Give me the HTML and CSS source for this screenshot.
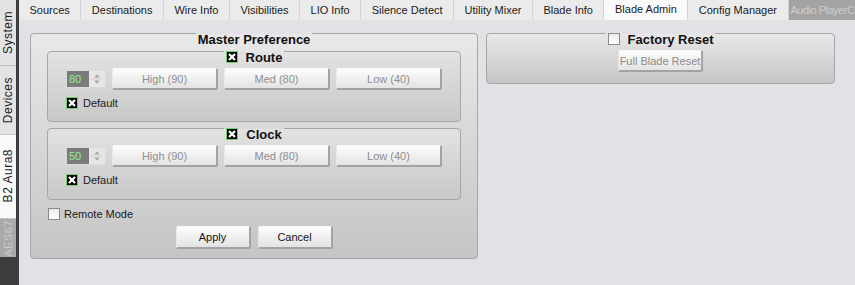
FILE: index.html
```html
<html>
  <head>
    <link rel="stylesheet" href="styles.css">
  </head>
  <body>
    <div class="app">
      <nav class="side">
        <div class="vtab"><span>System</span></div>
        <div class="vtab"><span>Devices</span></div>
        <div class="vtab vtab-active"><span>B2 Aura8</span></div>
        <div class="vtab vtab-off"><span>AES67</span></div>
      </nav>
      <div class="main">
        <div class="tabbar">
          <div class="tab">Sources</div>
          <div class="tab">Destinations</div>
          <div class="tab">Wire Info</div>
          <div class="tab">Visibilities</div>
          <div class="tab">LIO Info</div>
          <div class="tab">Silence Detect</div>
          <div class="tab">Utility Mixer</div>
          <div class="tab">Blade Info</div>
          <div class="tab tab-active">Blade Admin</div>
          <div class="tab">Config Manager</div>
          <div class="tab tab-off">Audio PlayerC</div>
        </div>
        <div class="content">
          <fieldset class="group master">
            <legend>Master Preference</legend>

            <fieldset class="group sub sub-first">
              <legend><svg class="chk" viewBox="0 0 12 12"><rect x="0.5" y="0.5" width="11" height="11" fill="#000" stroke="#6fd46f"/><path d="M3 3l6 6M9 3l-6 6" stroke="#fff" stroke-width="2.3"/></svg>Route</legend>
              <div class="pref-row">
                <div class="spin">
                  <span class="spin-val">80</span>
                  <span class="spin-btns"><svg viewBox="0 0 15 14"><path d="M5 5.5l2.5-3 2.5 3z" fill="#a8a8a8"/><path d="M2 7h11" stroke="#d4d4d4"/><path d="M5 8.5l2.5 3 2.5-3z" fill="#a8a8a8"/></svg></span>
                </div>
                <button class="btn" disabled>High (90)</button>
                <button class="btn" disabled>Med (80)</button>
                <button class="btn" disabled>Low (40)</button>
              </div>
              <div class="check-row"><svg class="chk" viewBox="0 0 12 12"><rect x="0.5" y="0.5" width="11" height="11" fill="#000" stroke="#6fd46f"/><path d="M3 3l6 6M9 3l-6 6" stroke="#fff" stroke-width="2.3"/></svg>Default</div>
            </fieldset>

            <fieldset class="group sub sub-next">
              <legend><svg class="chk" viewBox="0 0 12 12"><rect x="0.5" y="0.5" width="11" height="11" fill="#000" stroke="#6fd46f"/><path d="M3 3l6 6M9 3l-6 6" stroke="#fff" stroke-width="2.3"/></svg>Clock</legend>
              <div class="pref-row">
                <div class="spin">
                  <span class="spin-val">50</span>
                  <span class="spin-btns"><svg viewBox="0 0 15 14"><path d="M5 5.5l2.5-3 2.5 3z" fill="#a8a8a8"/><path d="M2 7h11" stroke="#d4d4d4"/><path d="M5 8.5l2.5 3 2.5-3z" fill="#a8a8a8"/></svg></span>
                </div>
                <button class="btn" disabled>High (90)</button>
                <button class="btn" disabled>Med (80)</button>
                <button class="btn" disabled>Low (40)</button>
              </div>
              <div class="check-row"><svg class="chk" viewBox="0 0 12 12"><rect x="0.5" y="0.5" width="11" height="11" fill="#000" stroke="#6fd46f"/><path d="M3 3l6 6M9 3l-6 6" stroke="#fff" stroke-width="2.3"/></svg>Default</div>
            </fieldset>

            <div class="check-row remote"><span class="box"></span>Remote Mode</div>
            <div class="actions">
              <button class="btn btn-on">Apply</button>
              <button class="btn btn-on">Cancel</button>
            </div>
          </fieldset>

          <fieldset class="group factory">
            <legend><span class="box"></span>Factory Reset</legend>
            <button class="btn btn-small" disabled>Full Blade Reset</button>
          </fieldset>
        </div>
      </div>
    </div>
  </body>
</html>
```

FILE: styles.css
```css
body {
    margin: 0;
    font-family: "Liberation Sans", Arial, sans-serif;
    font-size: 11px;
    color: #1a1a1a;
    background: #e2e2e6;
}
.app {
    display: flex;
    height: 285px;
    overflow: hidden;
}
.side {
    width: 19px;
    flex: none;
    background: #3d3d3d;
    display: flex;
    flex-direction: column;
}
.vtab {
    width: 16px;
    padding: 11px 0;
    background: #e3e3e3;
    border-bottom: 1px solid #c4c4c4;
    display: flex;
    justify-content: center;
    align-items: center;
}
.vtab span {
    writing-mode: vertical-rl;
    transform: rotate(180deg);
    font-size: 12px;
    letter-spacing: 0.5px;
    line-height: 16px;
    color: #1c1c1c;
}
.vtab-active {
    background: #fafafa;
    padding: 14px 0 15px;
}
.vtab-off {
    background: #a9a9a9;
    border-bottom: none;
    padding: 1px 0;
}
.vtab-off span {
    color: #cacaca;
    font-size: 11px;
}
.main {
    flex: 1;
    min-width: 0;
    display: flex;
    flex-direction: column;
}
.tabbar {
    height: 20px;
    display: flex;
    overflow: hidden;
    background: #3d3d3d;
}
.tab {
    flex: none;
    height: 20px;
    box-sizing: border-box;
    padding: 1px 10.5px 0;
    line-height: 19px;
    white-space: nowrap;
    background: #ebebeb;
    border-right: 1px solid #d2d2d2;
}
.tab-active {
    background: #f9f9f9;
    padding-top: 0;
}
.tab-off {
    background: #a3a3a3;
    color: #cdcdcd;
    padding: 1px 0 0 2px;
    border-right: none;
    letter-spacing: -0.5px;
    flex: 1;
}
.content {
    flex: 1;
    display: flex;
    align-items: flex-start;
    gap: 8px;
    padding: 0 20px 0 11px;
    background: #e2e2e6;
}
.group {
    box-sizing: border-box;
    margin: 0;
    min-inline-size: 0;
    border: 1px solid #a6a6a6;
    border-radius: 4px;
    background: linear-gradient(#e8e8e8, #c5c5c5);
}
.group legend {
    margin: 0 auto;
    padding: 14px 2px 0;
    line-height: 14px;
    font-size: 13px;
    font-weight: bold;
    color: #111;
}
.group legend .chk,
.group legend .box {
    vertical-align: top;
    margin-right: 8px;
}
.master {
    width: 448px;
    margin-top: -1px;
    padding: 0 16px 9px;
}
.factory {
    width: 349px;
    margin-top: -1px;
    padding: 3px 0 11px;
}
.sub {
    padding: 3px 18px 11px;
    background: linear-gradient(#e2e2e2, #c8c8c8);
}
.sub-first {
    margin-top: -10px;
}
.sub-next {
    margin-top: -8px;
    padding-bottom: 12px;
}
.pref-row {
    display: flex;
    align-items: center;
    justify-content: space-between;
    height: 22px;
}
.spin {
    width: 40px;
    height: 18px;
    box-sizing: border-box;
    display: flex;
    border: 1px solid #dadada;
}
.spin-val {
    width: 22px;
    background: #7b7b7b;
    color: #95ec95;
    line-height: 16px;
    padding-left: 2px;
    box-sizing: border-box;
}
.spin-btns {
    flex: 1;
    background: #e6e6e6;
    display: flex;
}
.spin-btns svg {
    width: 100%;
    height: 100%;
}
.btn {
    width: 106px;
    height: 22px;
    box-sizing: border-box;
    padding: 0;
    font-family: inherit;
    font-size: 11px;
    color: #8e8e92;
    background: linear-gradient(#fdfdfd, #e3e3e3);
    border: 1px solid;
    border-width: 1px 2px 2px 1px;
    border-color: #f6f6f6 #a3a3a3 #a3a3a3 #e8e8e8;
    border-radius: 2px;
}
.btn-on {
    width: 75px;
    height: 23px;
    color: #151515;
}
.btn-small {
    display: block;
    width: 85px;
    margin: 0 auto;
    color: #8a8a8a;
}
.check-row {
    display: flex;
    align-items: center;
    gap: 5px;
    height: 14px;
    margin-top: 6px;
}
.chk {
    width: 12px;
    height: 12px;
    flex: none;
}
.box {
    display: inline-block;
    width: 12px;
    height: 12px;
    box-sizing: border-box;
    border: 1px solid #8a8a8a;
    background: linear-gradient(#ececec, #ffffff);
}
.remote {
    margin: 7px 0 0 1px;
    gap: 4px;
}
.actions {
    display: flex;
    justify-content: center;
    gap: 7px;
    margin-top: 5px;
}
```
